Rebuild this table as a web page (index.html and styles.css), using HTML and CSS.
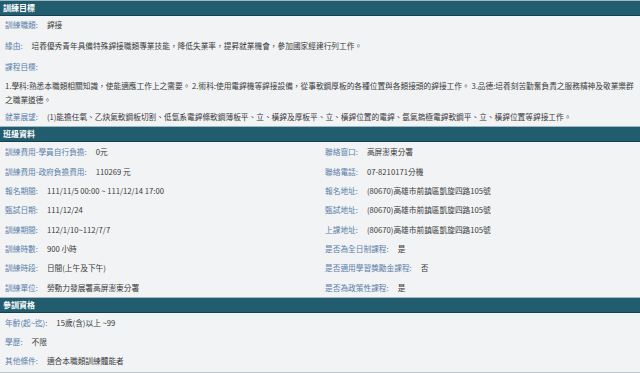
FILE: index.html
```html
<!DOCTYPE html>
<html lang="zh-Hant">
<head>
<meta charset="utf-8">
<title>課程資訊</title>
<link rel="stylesheet" href="styles.css">
</head>
<body>
<section class="sec">
  <h2 class="bar">訓練目標</h2>
  <div class="goal">
    <div class="item r1"><span class="lbl">訓練職類:</span><span class="val">銲接</span></div>
    <div class="item r2"><span class="lbl">緣由:</span><span class="val">培養優秀青年具備特殊銲接職類專業技能，降低失業率，提昇就業機會，參加國家經建行列工作。</span></div>
    <div class="item r3"><span class="lbl">課程目標:</span></div>
    <p class="para">1.學科:熟悉本職類相關知識，使能適應工作上之需要。 2.術科:使用電銲機等銲接設備，從事軟鋼厚板的各種位置與各類接頭的銲接工作。 3.品德:培養刻苦勤奮負責之服務精神及敬業樂群之職業道德。</p>
    <div class="item r4"><span class="lbl">就業展望:</span><span class="val">(1)能擔任氧、乙炔氣軟鋼板切割、低氫系電銲條軟鋼薄板平、立、橫銲及厚板平、立、橫銲位置的電銲、氬氣鎢極電銲軟鋼平、立、橫銲位置等銲接工作。</span></div>
  </div>
</section>
<section class="sec">
  <h2 class="bar">班級資料</h2>
  <div class="grid">
    <div class="cell"><span class="lbl">訓練費用-學員自行負擔:</span><span class="val">0元</span></div>
    <div class="cell"><span class="lbl">聯絡窗口:</span><span class="val">高屏澎東分署</span></div>
    <div class="cell"><span class="lbl">訓練費用-政府負擔費用:</span><span class="val">110269 元</span></div>
    <div class="cell"><span class="lbl">聯絡電話:</span><span class="val">07-8210171分機</span></div>
    <div class="cell"><span class="lbl">報名期間:</span><span class="val">111/11/5 00:00 ~ 111/12/14 17:00</span></div>
    <div class="cell"><span class="lbl">報名地址:</span><span class="val">(80670)高雄市前鎮區凱旋四路105號</span></div>
    <div class="cell"><span class="lbl">甄試日期:</span><span class="val">111/12/24</span></div>
    <div class="cell"><span class="lbl">甄試地址:</span><span class="val">(80670)高雄市前鎮區凱旋四路105號</span></div>
    <div class="cell"><span class="lbl">訓練期間:</span><span class="val">112/1/10~112/7/7</span></div>
    <div class="cell"><span class="lbl">上課地址:</span><span class="val">(80670)高雄市前鎮區凱旋四路105號</span></div>
    <div class="cell"><span class="lbl">訓練時數:</span><span class="val">900 小時</span></div>
    <div class="cell"><span class="lbl">是否為全日制課程:</span><span class="val">是</span></div>
    <div class="cell"><span class="lbl">訓練時段:</span><span class="val">日間(上午及下午)</span></div>
    <div class="cell"><span class="lbl">是否適用學習獎勵金課程:</span><span class="val">否</span></div>
    <div class="cell"><span class="lbl">訓練單位:</span><span class="val">勞動力發展署高屏澎東分署</span></div>
    <div class="cell"><span class="lbl">是否為政策性課程:</span><span class="val">是</span></div>
  </div>
</section>
<section class="sec last">
  <h2 class="bar">參訓資格</h2>
  <div class="qual">
    <div class="cell q"><span class="lbl">年齡(起~迄):</span><span class="val">15歲(含)以上 ~99</span></div>
    <div class="cell q"><span class="lbl">學歷:</span><span class="val">不限</span></div>
    <div class="cell q"><span class="lbl">其他條件:</span><span class="val">適合本職類訓練體能者</span></div>
  </div>
</section>
</body>
</html>
```

FILE: styles.css
```css
html, body {
  margin: 0;
  padding: 0;
  background: #f1f3f5;
  font-family: "Noto Sans CJK TC", "Noto Sans", sans-serif;
  font-size: 7.7px;
  color: #3a3a3a;
}
.sec { margin: 0; }
.bar {
  margin: 0;
  height: 14px;
  line-height: 14px;
  border-top: 1px solid #9fb7c1;
  border-bottom: 1px solid #164050;
  background: #225c6f;
  color: #ffffff;
  font-size: 8px;
  font-weight: bold;
  padding-left: 3px;
}
.lbl { color: #5b7ea8; margin-right: 9px; }
.val { color: #3a3a3a; }
.goal { padding: 3px 5px 3px 5px; }
.item { line-height: 12px; white-space: nowrap; }
.r2 { margin-top: 9px; }
.r3 { margin-top: 9px; }
.para { margin: 6px 0 0 0; line-height: 14px; }
.r4 { margin-top: 4px; }
.grid {
  display: grid;
  grid-template-columns: 320px 1fr;
  padding-top: 0.33px;
}
.cell {
  height: 19.33px;
  line-height: 19.33px;
  padding-left: 5px;
  white-space: nowrap;
}
.qual {
  padding-bottom: 2px;
  border-bottom: 1px solid #b8c6ce;
}
.q { height: 19px; line-height: 19px; }
```
